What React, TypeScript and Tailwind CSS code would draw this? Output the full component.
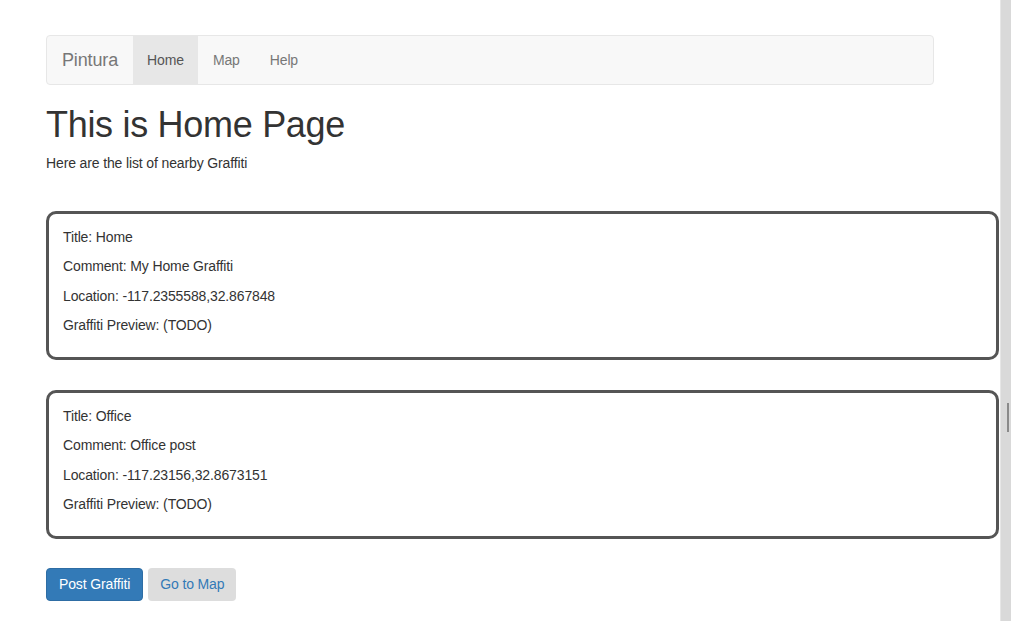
import React from "react";

const font = { fontFamily: '"Liberation Sans", Arial, sans-serif' };

function Card({ title, comment, location }: { title: string; comment: string; location: string }) {
  return (
    <div className="w-[953px] h-[149px] border-[3px] border-[#555555] rounded-[10px] px-[14px] pt-[13px] flex flex-col gap-[9.6px] text-[14px] leading-[20px] text-[#333333] tracking-[-0.13px]">
      <p>Title: {title}</p>
      <p>Comment: {comment}</p>
      <p>Location: {location}</p>
      <p>Graffiti Preview: (TODO)</p>
    </div>
  );
}

export default function App() {
  return (
    <div className="flex w-[1011px] h-[621px] overflow-hidden bg-white" style={font}>
      <div className="w-[1000px] pl-[46px] pt-[35px] text-[#333333]">
        <nav className="w-[888px] h-[50px] flex items-stretch bg-[#f8f8f8] border border-[#e7e7e7] rounded-[4px]">
          <div className="flex items-center px-[15px] text-[18px] text-[#777777] tracking-[-0.14px]">Pintura</div>
          <div className="flex items-center px-[14px] text-[14px] text-[#555555] bg-[#e7e7e7] tracking-[-0.13px]">Home</div>
          <div className="flex items-center px-[15px] text-[14px] text-[#777777] tracking-[-0.13px]">Map</div>
          <div className="flex items-center px-[15px] text-[14px] text-[#777777] tracking-[-0.13px]">Help</div>
        </nav>
        <h1 className="mt-[20px] mb-[8px] text-[36px] leading-[39.6px] font-medium text-[#333333] tracking-[-0.3px]">This is Home Page</h1>
        <p className="text-[14px] leading-[20px] text-[#333333] mb-[38px] tracking-[-0.13px]">Here are the list of nearby Graffiti</p>
        <div className="flex flex-col gap-[30px]">
          <Card title="Home" comment="My Home Graffiti" location="-117.2355588,32.867848" />
          <Card title="Office" comment="Office post" location="-117.23156,32.8673151" />
        </div>
        <div className="flex gap-[5px] mt-[29px]">
          <button className="h-[33px] px-[12px] rounded-[4px] bg-[#337ab7] border border-[#2e6da4] text-white text-[14px] tracking-[-0.13px]">Post Graffiti</button>
          <button className="h-[33px] px-[12px] rounded-[4px] bg-[#dddddd] text-[#337ab7] text-[14px] tracking-[-0.13px]">Go to Map</button>
        </div>
      </div>
      <div className="w-[11px] h-[621px] bg-[#d9d9d9] border-l border-[#e6e6e6] flex flex-col items-end pr-[2px]">
        <div className="mt-[403px] w-[2px] h-[29px] bg-[#8a8a8a]" />
      </div>
    </div>
  );
}
